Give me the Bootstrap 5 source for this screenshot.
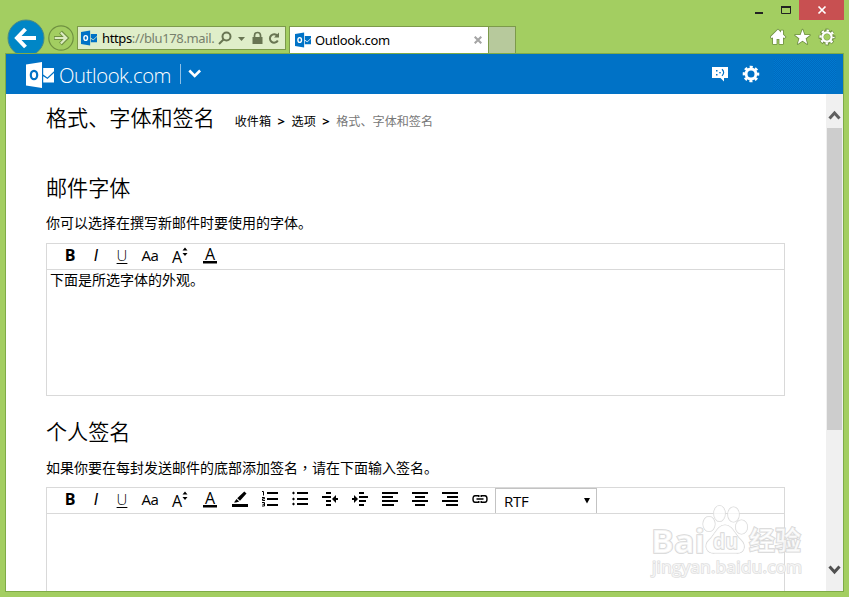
<!DOCTYPE html>
<html lang="zh-CN">
<head>
<meta charset="utf-8">
<meta name="viewport" content="width=device-width, initial-scale=1">
<title>Outlook.com</title>
<link href="https://cdn.jsdelivr.net/npm/bootstrap@5.3.0/dist/css/bootstrap.min.css" rel="stylesheet">
<style>
body{width:849px;height:597px;background:#a3ce61;font-family:"Open Sans","Noto Sans CJK SC",sans-serif;font-size:14px;line-height:20px;color:#000}
svg{display:block;flex:none}
.win-title{height:20px;padding-right:5px}
.win-close{width:45px;height:20px;background:#c85051}
.chrome{height:33px;padding-left:7px;padding-right:13px}
.back-btn{width:38px;height:34px;margin-top:-1px}
.fwd-btn{margin:5px 0 0 3px}
.addr{width:209px;height:24px;margin:6px 0 0 3px;border:1px solid #7c9a4a;background:#dfeec9;padding-left:3px;font-size:13px}
.addr-text{width:112px;margin-left:5px;color:#77806c;white-space:nowrap;font-family:"Noto Sans",sans-serif;letter-spacing:-.36px}
.page-tab{width:200px;height:27px;margin:6px 0 0 3px;background:#fff;border:1px solid #7c9a4a;border-bottom:0;padding:0 6px 0 5px;font:13px/27px "Noto Sans",sans-serif;letter-spacing:-.35px}
.new-tab{width:27px;height:27px;margin-top:6px;background:#b7c99c;border:1px solid #7c9a4a;border-left:0;border-bottom:0}
.page-frame{width:839px;height:539px;margin-left:5px;border:1px solid #7fab47;background:#fff}
.top-bar{height:40px;background:#0072c6;padding-left:20px}
.brand{font:300 20.3px/40px "Open Sans",sans-serif;color:#fff;width:116px;margin-left:5px;letter-spacing:-.42px;white-space:nowrap;padding-top:1px}
.brand-sep{width:1px;height:20px;background:#8fc0e6;margin:0 7px 0 5px}
.user-name{width:62px;height:30px;margin:0 7px 0 14px;background:repeating-conic-gradient(#007ad0 0 25%,#006abf 0 50%) 0 0/2px 2px}
.main-pane{width:820px;height:497px;padding-left:40px}
.page-h{font-size:21.1px;font-weight:350;line-height:30px;margin:0;white-space:nowrap}
.crumbs{font-size:12.1px;line-height:18px;margin:9px 0 0 20px;white-space:nowrap}
.crumbs b{font:700 13px/18px "Open Sans",sans-serif;width:20.5px;text-align:center;display:inline-block}
.hint{height:20px;white-space:nowrap}
.mid-comma{font-family:"Noto Sans CJK TC",sans-serif}
.editor{width:739px;border:1px solid #d9d9d9}
.tools{height:26px;padding-left:10px;border-bottom:1px solid #d9d9d9}
.tool{width:30px;height:23px;display:flex;align-items:center;justify-content:center;font:15px/23px "Open Sans",sans-serif;letter-spacing:-.4px}
.tool-s{width:26px;font-size:16px;letter-spacing:0}
.tool-u{font-size:15px;font-weight:300;text-decoration:underline;text-underline-offset:2px}
.tool-i{font-family:"Liberation Sans",sans-serif}
.pic{height:21px}
.rtf{width:102px;height:25px;border:1px solid #c3c3c3;border-bottom:0;padding:0 6px 0 8px;font:15px/24px "Open Sans",sans-serif;letter-spacing:-.3px}
.scroll-col{width:17px;height:497px;background:#f0f0f0}
.thumb{width:15px;height:302px;background:#cdcdcd}
.wm{left:644px;top:500px;pointer-events:none}
</style>
</head>
<body class="m-0 overflow-hidden position-relative">
<svg width="0" height="0" class="position-absolute">
<symbol id="mailmark" viewBox="0 0 28 26"><path d="M0 2.5 16 0v26L0 23.5z"/><path d="M17.2 6H28v3.3l-6.6 6.2-4.2-3zM17.2 14.3l4.3 2.6L28 11v9.5H17.2z"/></symbol>
</svg>
<header>
<div class="win-title d-flex justify-content-end">
<svg width="44" height="20"><path d="M0 13h8" stroke="#222" stroke-width="2"/><path d="M26.500 7.5h9v6h-9z" fill="none" stroke="#222"/><path d="M26 7h10" stroke="#222" stroke-width="2"/></svg>
<div class="win-close d-flex align-items-center justify-content-center"><svg width="10" height="10"><path d="m1.5 1.5 7 7m0-7-7 7" stroke="#fff" stroke-width="1.7"/></svg></div>
</div>
<div class="chrome d-flex align-items-start">
<div class="back-btn"><svg width="38" height="34"><circle cx="19" cy="19" r="18" fill="#0086c6" stroke="#4d8a83"/><path d="M18.5 10 10 19l8.5 9M10.5 19H29" fill="none" stroke="#fff" stroke-width="4"/></svg></div>
<svg class="fwd-btn" width="26" height="26"><circle cx="13" cy="13" r="12.2" fill="none" stroke="#6f9140" stroke-width="1.2"/><path d="m12.5 7 6 6-6 6M6 13h12" fill="none" stroke="#6f9140" stroke-width="4.2"/><path d="m12.8 7.5 5.5 5.5-5.5 5.5M6.7 13H18" fill="none" stroke="#dcebc2" stroke-width="2.2"/></svg>
<div class="addr d-flex align-items-center">
<svg width="16" height="16" fill="#0072c6"><use href="#mailmark" width="16" height="16"/><ellipse cx="4.7" cy="8" rx="1.8" ry="2.4" fill="none" stroke="#fff" stroke-width="1.4"/></svg>
<div class="addr-text"><span class="text-black">https</span>://blu178.mail.</div>
<svg width="64" height="22" class="ms-1"><g fill="none" stroke="#687552" stroke-width="2"><circle cx="8.5" cy="9.5" r="4"/><path d="m5.5 12.5-4.5 4.5"/><path d="M36.5 10.5V8.5a3 3 0 0 1 6 0v2" stroke-width="1.7"/><path d="M59.5 9a4.2 4.2 0 1 0 .3 4.5"/></g><path d="M20 10h7l-3.500 4zM34.500 10h10v7h-10zM61 5.500v5h-5z" fill="#687552"/></svg>
</div>
<div class="page-tab d-flex align-items-center">
<svg width="16" height="16" fill="#0072c6"><use href="#mailmark" width="16" height="16"/><ellipse cx="4.7" cy="8" rx="1.8" ry="2.4" fill="none" stroke="#fff" stroke-width="1.4"/></svg>
<span class="ms-1">Outlook.com</span>
<svg width="8" height="8" class="ms-auto"><path d="m.7.7 6.600 6.600M7.300.7.7 7.300" stroke="#a5a5a5" stroke-width="2.1"/></svg>
</div>
<div class="new-tab"></div>
<svg width="66" height="20" class="ms-auto mt-2" viewBox="0 0 66 20"><g fill="#fff" stroke="#6f8f43" stroke-width="1.6" paint-order="stroke" stroke-linejoin="round"><path d="m8 1.500-7.500 7.500 1.300 1.300L3 9.300V16h3.600v-5h2.800v5H13V9.300l1.200 1 1.300-1.300L13 6.500V2.500h-2v2z"/><path d="m32.500 1.500 2 5.500h5.500l-4.400 3.500 1.700 5.500-4.800-3.300-4.800 3.300 1.700-5.500L25 7h5.500z"/></g><g transform="translate(57 9)"><circle r="5" fill="none" stroke="#6f8f43" stroke-width="4"/><circle r="6.700" fill="none" stroke="#6f8f43" stroke-width="3.400" stroke-dasharray="3.400 1.862" stroke-dashoffset="1.700"/><circle r="6.500" fill="none" stroke="#fff" stroke-width="2.200" stroke-dasharray="2.400 2.705" stroke-dashoffset="1.200"/><circle r="4.600" fill="none" stroke="#fff" stroke-width="2.200"/></g></svg>
</div>
</header>
<div class="page-frame overflow-hidden">
<nav class="top-bar d-flex align-items-center">
<svg width="28" height="26" style="margin-top:2px" fill="#fff"><use href="#mailmark" width="28" height="26"/><ellipse cx="8" cy="13" rx="3.200" ry="4.200" fill="none" stroke="#0072c6" stroke-width="2.200"/></svg>
<div class="brand">Outlook.com</div>
<div class="brand-sep"></div>
<svg width="14" height="10"><path d="m1.300 1.500 5.400 5.400 5.400-5.400" fill="none" stroke="#fff" stroke-width="2.600"/></svg>
<svg width="16" height="16" class="ms-auto"><path d="M0 1h16v11h-4v3.500L8.500 12H0z" fill="#fff"/><path d="M4 4h1.500v1.500H4zM4 8h1.500v1.500H4zM7 6.300h2v1H7z" fill="#0072c6"/><path d="M10 3.300q3.300 3.200 0 6.500" fill="none" stroke="#0072c6" stroke-width="1.200"/></svg>
<svg width="18" height="18" viewBox="-9 -9 18 18" style="margin-left:14px"><circle r="5" fill="none" stroke="#fff" stroke-width="3"/><circle r="7" fill="none" stroke="#fff" stroke-width="2.600" stroke-dasharray="3 2.498" stroke-dashoffset="1.500"/></svg>
<div class="user-name"></div>
</nav>
<div class="d-flex">
<main class="main-pane overflow-hidden">
<div class="d-flex" style="padding-top:9px"><h1 class="page-h">格式、字体和签名</h1><div class="crumbs">收件箱<b>&gt;</b>选项<b>&gt;</b><span style="color:#777">格式、字体和签名</span></div></div>
<h2 class="page-h" style="margin-top:40px">邮件字体</h2>
<div class="hint" style="margin-top:10px">你可以选择在撰写新邮件时要使用的字体。</div>
<section class="editor" style="height:153px;margin-top:10px">
<div class="tools d-flex">
<span class="tool tool-s fw-bold">B</span><span class="tool tool-s tool-i fst-italic">I</span><span class="tool tool-s tool-u">U</span><span class="tool">Aa</span>
<span class="tool"><svg width="18" height="24"><text x="1" y="19" font-size="16">A</text><path d="M11.500 6.500h5L14 3.500zM11.500 9h5L14 12z"/></svg></span>
<span class="tool"><svg width="16" height="24"><text x="3" y="16" font-size="16">A</text><path d="M1 17h14v2.500H1z"/></svg></span>
</div>
<div style="padding:0 3px">下面是所选字体的外观。</div>
</section>
<h2 class="page-h" style="margin-top:21px">个人签名</h2>
<div class="hint" style="margin-top:10px">如果你要在每封发送邮件的底部添加签名<span class="mid-comma" lang="zh-TW">，</span>请在下面输入签名。</div>
<section class="editor" style="height:120px;margin-top:10px">
<div class="tools d-flex">
<span class="tool tool-s fw-bold">B</span><span class="tool tool-s tool-i fst-italic">I</span><span class="tool tool-s tool-u">U</span><span class="tool">Aa</span>
<span class="tool"><svg width="18" height="24"><text x="1" y="19" font-size="16">A</text><path d="M11.500 6.500h5L14 3.500zM11.500 9h5L14 12z"/></svg></span>
<span class="tool"><svg width="16" height="24"><text x="3" y="16" font-size="16">A</text><path d="M1 17h14v2.500H1z"/></svg></span>
<span class="tool pic"><svg width="16" height="22"><path d="M0 16h16v3H0zM12.300 3.500l2.200 2-6.500 7.300-2.800-2.600zM4.500 10.900l2.700 2.500L4 14.500H2z"/></svg></span>
<span class="tool pic"><svg width="16" height="22"><path d="M5 4h11v2H5zM5 10h11v2H5zM5 16h11v2H5z"/><path d="M0 3.500h1.500v4M0 9.500h2.500v1.300H.5v1.700H3M0 14.500h2.500V18H0M.5 16.300h2" fill="none" stroke="#000"/></svg></span>
<span class="tool pic"><svg width="16" height="22"><path d="M5 4h11v2H5zM5 10h11v2H5zM5 15h11v2H5zM0 5l1.500-1.500L3 5 1.500 6.500zM0 11l1.500-1.500L3 11l-1.500 1.500zM0 16l1.500-1.500L3 16l-1.500 1.500z"/></svg></span>
<span class="tool pic"><svg width="16" height="22"><path d="M4 4h5v2H4zM0 8h9v2H0zM4 12h5v2H4zM4 16h5v2H4zM10 11l4-4v3h2v2h-2v3z"/></svg></span>
<span class="tool pic"><svg width="16" height="22"><path d="M7 4h5v2H7zM7 8h9v2H7zM7 12h7v2H7zM7 16h5v2H7zM6 11 2 7v3H0v2h2v3z"/></svg></span>
<span class="tool pic"><svg width="16" height="22"><path d="M0 4h16v2H0zM0 8h11v2H0zM0 12h16v2H0zM0 16h12v2H0z"/></svg></span>
<span class="tool pic"><svg width="16" height="22"><path d="M0 4h16v2H0zM3 8h10v2H3zM0 12h16v2H0zM3 16h10v2H3z"/></svg></span>
<span class="tool pic"><svg width="16" height="22"><path d="M0 4h16v2H0zM5 8h11v2H5zM0 12h16v2H0zM4 16h12v2H4z"/></svg></span>
<span class="tool pic"><svg width="16" height="22" fill="none" stroke="#000" stroke-width="1.4"><path d="M6.800 9V7.700H3Q1 7.700 1 11t2 3.300h3.800V13M9.200 9V7.700H13q2 0 2 3.300t-2 3.300H9.200V13M4.500 11h7"/></svg></span>
<div class="rtf d-flex align-items-center justify-content-between"><span>RTF</span><svg width="6" height="6"><path d="M0 0h6L3 5.500z"/></svg></div>
</div>
</section>
</main>
<aside class="scroll-col d-flex flex-column align-items-center">
<svg width="17" height="34"><path d="m3.500 24.500 5-5.500 5 5.500" fill="none" stroke="#606060" stroke-width="3"/></svg>
<div class="thumb"></div>
<svg width="17" height="24" class="mt-auto" style="margin-bottom:10px"><path d="m3.500 9.500 5 5.500 5-5.500" fill="none" stroke="#505050" stroke-width="3"/></svg>
</aside>
</div>
</div>
<svg class="wm position-absolute" width="170" height="85" viewBox="0 0 170 85">
<g fill="#fff" fill-opacity=".7" stroke="#d6d6d6" stroke-width="1.1" paint-order="stroke" font-family="Open Sans,Noto Sans CJK SC,sans-serif">
<ellipse cx="75.500" cy="13.500" rx="5.700" ry="8"/><ellipse cx="89.500" cy="14.500" rx="5.700" ry="7.500"/><ellipse cx="65" cy="24" rx="6" ry="7.500"/><ellipse cx="97.500" cy="27" rx="6" ry="7"/>
<path d="M81 25c-8 0-10 10-16 15-6 6-2 14 6 13h21c8 1 11-7 5-13-6-5-8-15-16-15z"/>
<g stroke-width="1.600"><text x="7" y="53" font-size="33" font-weight="700" textLength="54" lengthAdjust="spacingAndGlyphs">Bai</text><text x="69" y="49" font-size="22" font-weight="700" textLength="25" lengthAdjust="spacingAndGlyphs">du</text><text x="105" y="50" font-size="26" font-weight="700" textLength="52">经验</text><text x="8" y="73" font-size="17" font-weight="400" textLength="150" stroke="#e0e0e0">jingyan.baidu.com</text></g>
</g></svg>
<script src="https://cdn.jsdelivr.net/npm/bootstrap@5.3.0/dist/js/bootstrap.bundle.min.js"></script>
</body>
</html>
